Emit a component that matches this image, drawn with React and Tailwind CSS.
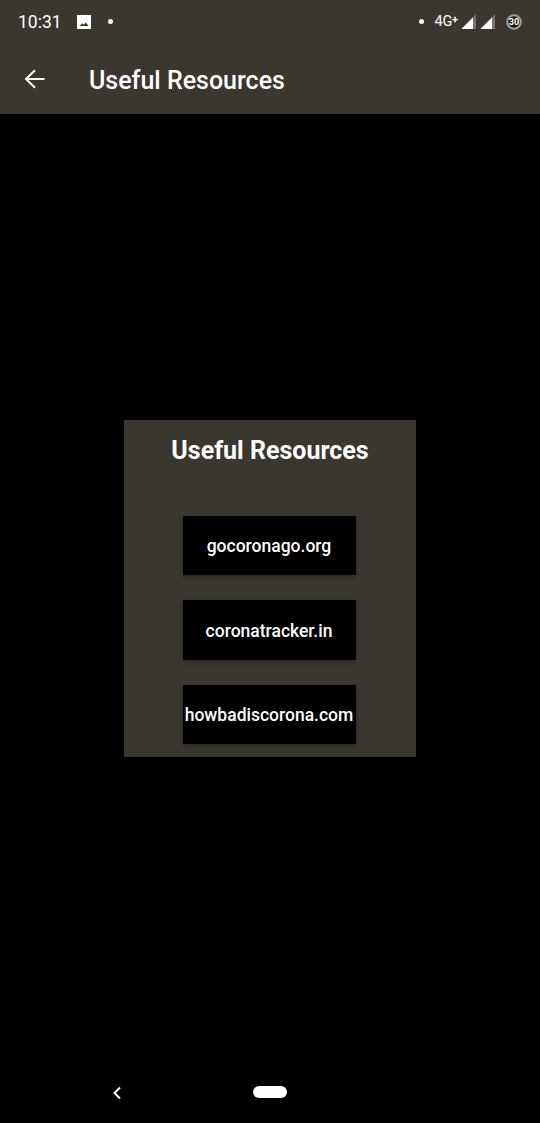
export default function App() {
  const font = { fontFamily: 'Roboto, sans-serif' };
  const links = ['gocoronago.org', 'coronatracker.in', 'howbadiscorona.com'];
  return (
    <div className="w-[540px] h-[1123px] bg-black flex flex-col text-white overflow-hidden font-['Roboto',sans-serif]">
      <header className="h-[114px] bg-[#3a3630] shrink-0 flex flex-col">
        <div className="h-[43px] shrink-0 flex items-center pl-[18px] pr-[18px]">
          <span className="text-[17.5px] leading-none w-[58px] mt-[2px]">10:31</span>
          <svg width="16" height="16" viewBox="0 0 16 16">
            <path fill="#fff" fillRule="evenodd" d="M1.5 1h13a.5.5 0 0 1 .5.5v13a.5.5 0 0 1-.5.5h-13a.5.5 0 0 1-.5-.5v-13A.5.5 0 0 1 1.5 1ZM3.5 12h9L9.8 8.4 7.8 10.8 6.4 9.2Z" />
          </svg>
          <span className="ml-[16px] w-[5px] h-[5px] rounded-full bg-white" />
          <div className="ml-auto flex items-center">
            <span className="w-[5px] h-[5px] rounded-full bg-white" />
            <span className="ml-[11px] text-[14.5px] leading-none tracking-[-0.3px] mt-[1px]">4G</span>
            <span className="text-[11px] leading-none mb-[5px] font-bold">+</span>
            <svg className="ml-[3px] mt-[1px]" width="16" height="16" viewBox="0 0 16 16">
              <path fill="#77746f" d="M15 0v15H0Z" />
              <path fill="#fff" d="M12 3.5V15H0.5Z" />
            </svg>
            <svg className="ml-[3px] mt-[1px]" width="16" height="16" viewBox="0 0 16 16">
              <path fill="#77746f" d="M15 0v15H0Z" />
              <path fill="#fff" d="M12 3.5V15H0.5Z" />
            </svg>
            <svg className="ml-[10px]" width="16" height="16" viewBox="0 0 16 16">
              <circle cx="8" cy="8" r="6.8" fill="#1d1c19" stroke="#a09e99" strokeWidth="2" />
              <text x="8" y="11" textAnchor="middle" fontSize="9" fontWeight="700" fill="#fff" style={font}>30</text>
            </svg>
          </div>
        </div>
        <div className="flex-1 flex items-center pl-[24px]">
          <svg width="21" height="20" viewBox="0 0 21 20" fill="none" stroke="#fff" strokeWidth="2">
            <path d="M20.5 10H2M11 1.2 2 10l9 8.8" />
          </svg>
          <h1 className="ml-[44px] mt-[3px] text-[25px] leading-none font-medium">Useful Resources</h1>
        </div>
      </header>
      <main className="flex-1 flex flex-col items-center pt-[306px]">
        <section className="w-[292px] h-[337px] bg-[#3a3630] flex flex-col items-center">
          <h2 className="mt-[17px] h-[28px] text-[25px] leading-[28px] font-bold">Useful Resources</h2>
          <div className="mt-[51px] ml-[-2px] flex flex-col gap-[25px]">
            {links.map((l, i) => (
              <div key={l} className={`w-[173px] bg-black flex items-center justify-center text-[17.5px] font-medium pt-[2px] whitespace-nowrap shadow-[0_2px_4px_rgba(0,0,0,0.25)] ${i === 1 ? 'h-[60px]' : 'h-[59px]'}`}>
                {l}
              </div>
            ))}
          </div>
        </section>
      </main>
      <footer className="h-[60px] shrink-0 flex items-start pt-[23px]">
        <svg className="ml-[111px]" width="12" height="14" viewBox="0 0 12 14" fill="none" stroke="#fff" strokeWidth="2">
          <path d="M9 1.5 3.5 7 9 12.5" />
        </svg>
        <span className="ml-[130px] w-[34px] h-[12px] rounded-full bg-white" />
      </footer>
    </div>
  );
}
